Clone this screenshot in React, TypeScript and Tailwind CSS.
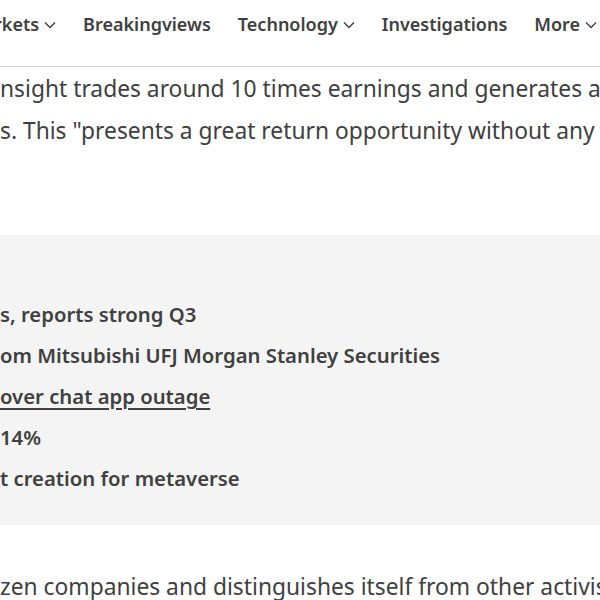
import React from "react";

const Chevron = () => (
  <svg width="12" height="8" viewBox="0 0 12 8" className="ml-[5px] mt-[2px]" fill="none" stroke="#404040" strokeWidth="1.4">
    <path d="M1 1.5 L6 6.5 L11 1.5" />
  </svg>
);

const NavItem = ({ label, chevron }: { label: string; chevron?: boolean }) => (
  <div className="flex items-center">
    <span>{label}</span>
    {chevron && <Chevron />}
  </div>
);

export default function App() {
  const font = { fontFamily: '"Noto Sans", "Open Sans", sans-serif' };
  return (
    <div className="w-[600px] h-[600px] overflow-hidden bg-white text-[#404040]" style={font}>
      <div className="h-[67px] border-b border-[#d0d0d0] flex items-start pt-[11px]">
        <div className="flex gap-[27px] text-[18px] font-semibold whitespace-nowrap leading-[26px] ml-[-6px]">
          <NavItem label="rkets" chevron />
          <NavItem label="Breakingviews" />
          <NavItem label="Technology" chevron />
          <NavItem label="Investigations" />
          <NavItem label="More" chevron />
        </div>
      </div>
      <div className="text-[22.8px] leading-[42px] whitespace-nowrap pt-[1px]">
        <p>nsight trades around 10 times earnings and generates a</p>
        <p>s. This "presents a great return opportunity without any</p>
      </div>
      <div className="mt-[83px] h-[290px] bg-[#f4f4f4] pt-[59px] text-[20.3px] font-semibold whitespace-nowrap leading-[41px]">
        <p>s, reports strong Q3</p>
        <p>om Mitsubishi UFJ Morgan Stanley Securities</p>
        <p className="underline decoration-2 underline-offset-[4px]">over chat app outage</p>
        <p>14%</p>
        <p>t creation for metaverse</p>
      </div>
      <div className="text-[22.8px] leading-[42px] whitespace-nowrap pt-[41px]">
        <p>zen companies and distinguishes itself from other activis</p>
      </div>
    </div>
  );
}
